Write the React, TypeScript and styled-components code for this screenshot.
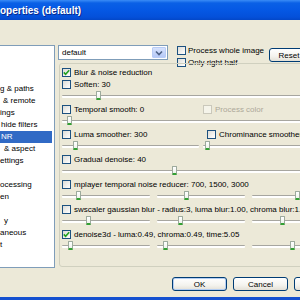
import React from "react";
import styled, { createGlobalStyle, css } from "styled-components";

const Global = createGlobalStyle`
  html, body { margin: 0; padding: 0; }
  body {
    width: 300px; height: 300px; overflow: hidden;
    background: #ECE9D8;
    font-family: "Liberation Sans", Arial, sans-serif;
    font-size: 8px; color: #000;
  }
`;

const Window = styled.div`
  width: 360px; height: 300px; box-sizing: border-box;
  display: flex; flex-direction: column;
  background: #ECE9D8;
  border-bottom: 3px solid #1450D0;
`;

const TitleBar = styled.div`
  height: 20px; flex: none; box-sizing: border-box;
  padding: 2px 0 0 0;
  background: linear-gradient(#3A8CF6 0px, #0A60E6 3px, #0558E4 10px, #0450DA 17px, #0347C8 20px);
  color: #fff; font-weight: bold; font-size: 10px; line-height: 18px;
  text-shadow: 1px 1px 0 #0A2A8C;
  white-space: nowrap;
`;

const Content = styled.div`
  flex: 1; display: flex; flex-direction: column;
  padding-top: 23px;
`;

const MainRow = styled.div`
  display: flex; gap: 3px; height: 225px;
`;

const List = styled.div`
  width: 55px; height: 223px; margin-top: 2px; box-sizing: border-box;
  background: #fff; border: 1px solid #7F9DB9; border-left: none;
  padding-top: 37px; flex: none;
`;

const Item = styled.div<{ $sel?: boolean; $indent?: number }>`
  height: 12px; line-height: 12px; white-space: nowrap; overflow: hidden;
  padding-left: ${(p) => p.$indent ?? 0}px; margin-right: 2px;
  ${(p) => p.$sel && css`background: #316AC5; color: #fff;`}
`;

const Panel = styled.div`
  flex: 1; display: flex; flex-direction: column;
`;

const TopRow = styled.div`
  height: 20px; display: flex; align-items: flex-start;
`;

const Combo = styled.div`
  margin-top: 2px; width: 110px; height: 15px; box-sizing: border-box;
  border: 1px solid #7F9DB9; background: #fff;
  display: flex; align-items: stretch; padding: 1px;
`;

const ComboText = styled.div`
  flex: 1; padding-left: 2px; line-height: 11px;
`;

const ComboButton = styled.div`
  width: 14px; box-sizing: border-box; border: 1px solid #B8CCF6; border-radius: 1px;
  background: linear-gradient(#D6E2FD, #B6C9F7);
  display: flex; align-items: center; justify-content: center;
`;

const OptionCol = styled.div`
  margin-left: 9px; display: flex; flex-direction: column; margin-top: 1px;
`;

const OptRow = styled.label`
  display: flex; align-items: center; height: 12px; gap: 2px; white-space: nowrap;
`;

const XPButton = styled.div<{ $def?: boolean; $w: number }>`
  width: ${(p) => p.$w}px; height: 14px; box-sizing: border-box; flex: none;
  border: 1px solid #003C74; border-radius: 3px;
  background: linear-gradient(#FFFFFF, #F4F3EE 60%, #E3E0D6);
  display: flex; align-items: center; justify-content: center;
  font-size: 8px;
  ${(p) => p.$def && css`box-shadow: inset 0 0 0 1px #B3CDF2;`}
`;

const ResetWrap = styled.div`
  margin-left: 5px; margin-top: 5px;
`;

const Group = styled.div`
  margin-left: 1px; width: 284px; height: 204px; box-sizing: border-box;
  border: 1px solid #D0D0BF; border-radius: 3px;
  padding: 2px 2px 0 2px;
  display: flex; flex-direction: column;
`;

const CheckRow = styled.div<{ $cols?: number }>`
  height: 12px; display: grid; align-items: center;
  grid-template-columns: ${(p) => (p.$cols === 2 ? "137px 137px" : "1fr")};
  column-gap: 4px;
`;

const SliderRow = styled.div<{ $cols?: number }>`
  height: 13px; display: grid; align-items: center;
  grid-template-columns: repeat(${(p) => p.$cols ?? 1}, 1fr);
  column-gap: ${(p) => (p.$cols === 3 ? 7 : 4)}px;
`;

const CheckLabel = styled.div<{ $disabled?: boolean; $indent?: number }>`
  display: flex; align-items: center; gap: 3px; white-space: nowrap;
  padding-left: ${(p) => p.$indent ?? 0}px;
  color: ${(p) => (p.$disabled ? "#ACA899" : "#000")};
`;

const Box = styled.div<{ $disabled?: boolean }>`
  width: 9px; height: 9px; box-sizing: border-box; flex: none;
  border: 1px solid ${(p) => (p.$disabled ? "#CAC8BB" : "#1C5180")};
  background: ${(p) => (p.$disabled ? "#F5F4EA" : "linear-gradient(135deg, #DCDCD7, #FFFFFF)")};
  display: flex; align-items: center; justify-content: center;
`;

const Track = styled.div`
  position: relative; height: 2px; border-top: 1px solid #A7A6A0;
  background: #fff; border-radius: 1px;
`;

const Thumb = styled.div`
  position: absolute; top: -5px; width: 5px; height: 9px; box-sizing: border-box;
  margin-left: -2px;
  border: 1px solid #9DAA9D; border-bottom: 2px solid #33A033;
  border-radius: 1px;
  background: linear-gradient(#FFFFFF, #EEF3EC);
`;

const ButtonRow = styled.div`
  display: flex; justify-content: flex-end; gap: 6px;
  padding-right: 11px; margin-top: 9px;
`;

function Check({ checked, disabled }: { checked?: boolean; disabled?: boolean }) {
  return (
    <Box $disabled={disabled}>
      {checked && (
        <svg width="7" height="7" viewBox="0 0 7 7">
          <path d="M0.8 3.4 L2.6 5.3 L6.2 1.3" stroke="#21A121" strokeWidth="1.6" fill="none" />
        </svg>
      )}
    </Box>
  );
}

function Slider({ value }: { value: number }) {
  return (
    <Track>
      <Thumb style={{ left: `calc(4px + (100% - 8px) * ${value})` }} />
    </Track>
  );
}

function Opt({ label, checked, disabled, indent }: { label: string; checked?: boolean; disabled?: boolean; indent?: number }) {
  return (
    <CheckLabel $disabled={disabled} $indent={indent}>
      <Check checked={checked} disabled={disabled} />
      <span>{label}</span>
    </CheckLabel>
  );
}

const items: { t: string; sel?: boolean; indent?: number }[] = [
  { t: "g & paths" },
  { t: "& remote", indent: 3 },
  { t: "ings" },
  { t: "hide filters", indent: 1 },
  { t: "NR", sel: true, indent: 1 },
  { t: "& aspect", indent: 4 },
  { t: "ettings" },
  { t: "" },
  { t: "ocessing" },
  { t: "en" },
  { t: "" },
  { t: "y", indent: 4 },
  { t: "aneous" },
  { t: "t" },
];

export default function App() {
  return (
    <>
      <Global />
      <Window>
        <TitleBar>operties (default)</TitleBar>
        <Content>
          <MainRow>
            <List>
              {items.map((it, i) => (
                <Item key={i} $sel={it.sel} $indent={it.indent}>{it.t}</Item>
              ))}
            </List>
            <Panel>
              <TopRow>
                <Combo>
                  <ComboText>default</ComboText>
                  <ComboButton>
                    <svg width="8" height="6" viewBox="0 0 8 6">
                      <path d="M1 1.5 L4 4.5 L7 1.5" stroke="#4D6185" strokeWidth="1.6" fill="none" />
                    </svg>
                  </ComboButton>
                </Combo>
                <OptionCol>
                  <OptRow><Check /><span>Process whole image</span></OptRow>
                  <OptRow><Check /><span>Only right half</span></OptRow>
                </OptionCol>
                <ResetWrap>
                  <XPButton $w={40}>Reset</XPButton>
                </ResetWrap>
              </TopRow>
              <Group>
                <CheckRow><Opt label="Blur & noise reduction" checked /></CheckRow>
                <CheckRow><Opt label="Soften: 30" /></CheckRow>
                <SliderRow><Slider value={0.12} /></SliderRow>
                <CheckRow $cols={2}>
                  <Opt label="Temporal smooth: 0" />
                  <Opt label="Process color" disabled />
                </CheckRow>
                <SliderRow><Slider value={0.01} /></SliderRow>
                <CheckRow $cols={2}>
                  <Opt label="Luma smoother: 300" />
                  <Opt label="Chrominance smoother: 200" indent={4} />
                </CheckRow>
                <SliderRow $cols={2}>
                  <Slider value={0.07} />
                  <Slider value={0} />
                </SliderRow>
                <CheckRow><Opt label="Gradual denoise: 40" /></CheckRow>
                <SliderRow><Slider value={0.4} /></SliderRow>
                <CheckRow><Opt label="mplayer temporal noise reducer: 700, 1500, 3000" /></CheckRow>
                <SliderRow $cols={3}>
                  <Slider value={0.15} />
                  <Slider value={0.31} />
                  <Slider value={0.51} />
                </SliderRow>
                <CheckRow><Opt label="swscaler gaussian blur - radius:3, luma blur:1.00, chroma blur:1.00" /></CheckRow>
                <SliderRow $cols={3}>
                  <Slider value={0.27} />
                  <Slider value={0.24} />
                  <Slider value={0.33} />
                </SliderRow>
                <CheckRow><Opt label="denoise3d - luma:0.49, chroma:0.49, time:5.05" checked /></CheckRow>
                <SliderRow $cols={3}>
                  <Slider value={0.05} />
                  <Slider value={0.05} />
                  <Slider value={0.45} />
                </SliderRow>
              </Group>
            </Panel>
          </MainRow>
          <ButtonRow>
            <XPButton $w={55} $def>OK</XPButton>
            <XPButton $w={55}>Cancel</XPButton>
            <XPButton $w={55}>Apply</XPButton>
          </ButtonRow>
        </Content>
      </Window>
    </>
  );
}
